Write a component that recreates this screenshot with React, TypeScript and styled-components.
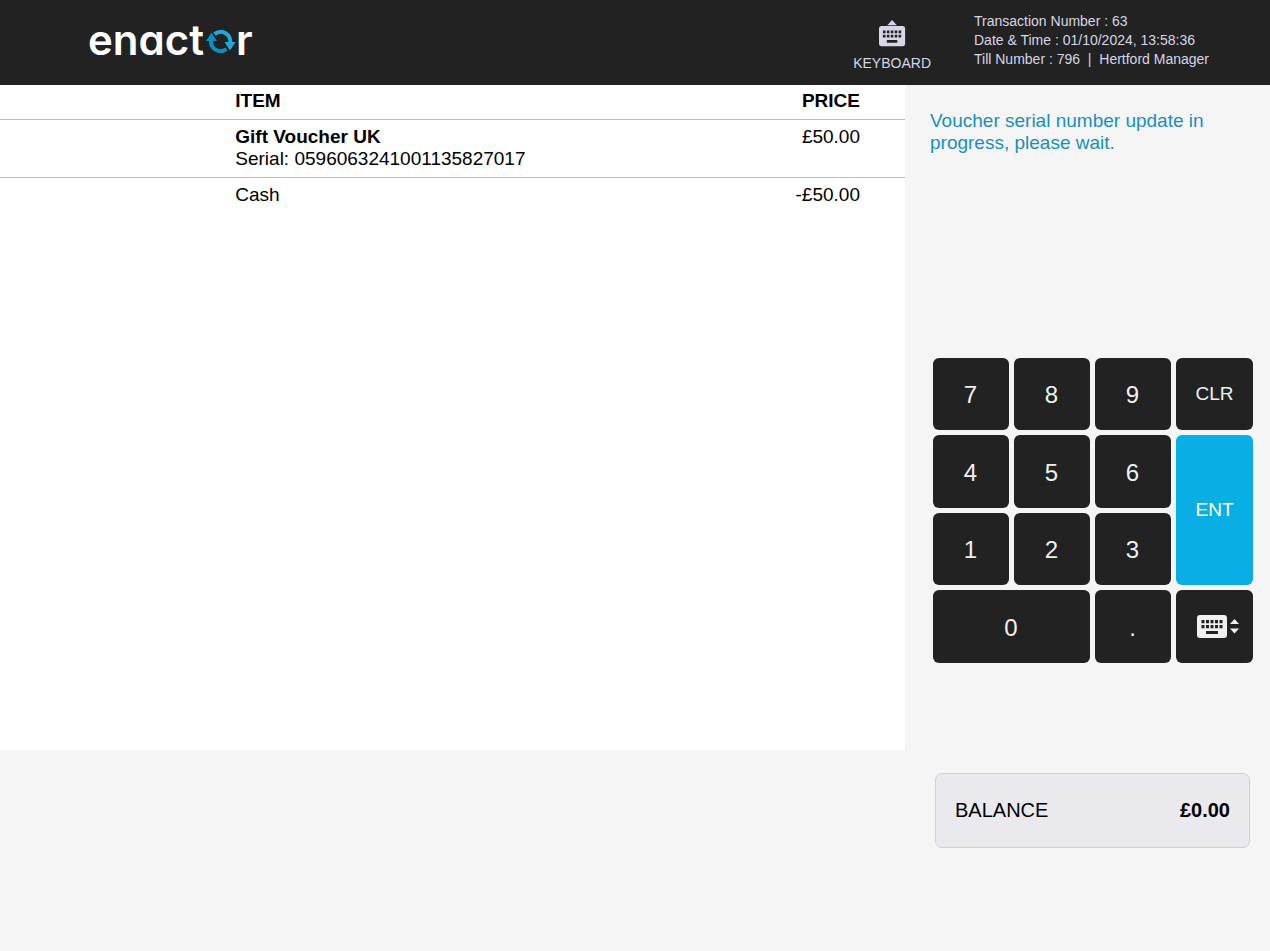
import React from "react";
import styled, { createGlobalStyle } from "styled-components";

const GlobalStyle = createGlobalStyle`
  *, *::before, *::after { box-sizing: border-box; }
  body {
    margin: 0;
    background: #f5f5f5;
    color: #000;
    font-family: "Liberation Sans", Arial, sans-serif;
  }
  button { font-family: inherit; cursor: pointer; }
`;

const Page = styled.div`
  display: flex;
  flex-direction: column;
  min-height: 100vh;
`;

const Header = styled.header`
  display: flex;
  align-items: flex-start;
  min-height: 85px;
  padding-left: 88px;
  background: #222;
  color: #d6d6e6;
`;

const Logo = styled.div`
  display: flex;
  align-items: center;
  margin-right: auto;
  padding-top: 15px;
  color: #fff;
  font-family: Inter, sans-serif;
  font-size: 42px;
  font-weight: 600;
  font-feature-settings: "cv11";
  line-height: 50px;
`;

const LogoMark = styled.svg`
  width: 30px;
  height: 26px;
  margin: 4px 0 0 2px;
`;

const KeyboardButton = styled.button`
  display: flex;
  flex-direction: column;
  align-items: center;
  gap: 8px;
  margin: 20px 43px 0 0;
  padding: 0;
  border: 0;
  background: none;
  color: inherit;
  font-size: 14px;
  line-height: 16px;
`;

const TillInfo = styled.div`
  width: 296px;
  padding-top: 12px;
  font-size: 14px;
  line-height: 19px;
`;

const Main = styled.main`
  display: grid;
  grid-template-columns: minmax(0, 1fr) minmax(320px, 365px);
  flex: 1;
`;

const Basket = styled.section`
  align-self: start;
  min-height: calc(70vh - 1px);
  background: #fff;
`;

const BasketTable = styled.table`
  width: 100%;
  border-collapse: collapse;
  font-size: 19px;
  line-height: 22px;
`;

const Cell = styled.td<{ $price?: boolean }>`
  padding: ${(p) => (p.$price ? "6px 45px 7px 0" : "6px 0 7px 26%")};
  text-align: ${(p) => (p.$price ? "right" : "left")};
  vertical-align: top;

  thead & { padding-top: 5px; }
`;

const Row = styled.tr`
  tbody > & { border-top: 1px solid #bcbcbc; }
`;

const ItemName = styled.strong`
  display: block;
`;

const Side = styled.aside`
  display: flex;
  flex-direction: column;
  padding: 25px 15px 0 25px;
`;

const Message = styled.p`
  min-height: 248px;
  margin: 0;
  color: #1a8fbd;
  font-size: 19px;
  line-height: 22px;
`;

const Keypad = styled.div`
  display: grid;
  grid-template-columns: 76fr 76fr 76fr 77fr;
  grid-template-rows: 72fr 73fr 72fr 73fr;
  gap: 5px;
  height: 305px;
  margin: 0 2px 0 3px;
`;

const Key = styled.button<{ $wide?: boolean; $tall?: boolean; $label?: boolean }>`
  display: flex;
  align-items: center;
  justify-content: center;
  grid-column: span ${(p) => (p.$wide ? 2 : 1)};
  grid-row: span ${(p) => (p.$tall ? 2 : 1)};
  padding: ${(p) => (p.$label ? "0" : "2px 1px 0 0")};
  border: 0;
  border-radius: 6px;
  background: ${(p) => (p.$tall ? "#09aee4" : "#222")};
  color: ${(p) => (p.$tall ? "#fff" : "#f0f0f0")};
  font-size: ${(p) => (p.$label ? 19 : 24)}px;
`;

const Balance = styled.div`
  display: flex;
  align-items: center;
  justify-content: space-between;
  height: 75px;
  margin: 110px 5px 0;
  padding: 0 19px;
  border: 1px solid #cfcfdc;
  border-radius: 7px;
  background: #eae9ee;
  font-size: 20px;
`;

const KeyboardShape = () => (
  <path
    fillRule="evenodd"
    d="M3 0H27Q30 0 30 3V20Q30 23 27 23H3Q0 23 0 20V3Q0 0 3 0Z
      M4.500 5v3.200h3v-3.200Z M9 5v3.200h3v-3.200Z M13.500 5v3.200h3v-3.200Z M18 5v3.200h3v-3.200Z M22.500 5v3.200h3v-3.200Z
      M4.500 10v3.200h3v-3.200Z M9 10v3.200h3v-3.200Z M13.500 10v3.200h3v-3.200Z M18 10v3.200h3v-3.200Z M22.500 10v3.200h3v-3.200Z
      M9 16v3h12v-3Z"
  />
);

const digits = ["7", "8", "9", "CLR", "4", "5", "6", "ENT", "1", "2", "3"];

export default function App() {
  return (
    <Page>
      <GlobalStyle />
      <Header>
        <Logo>
          enact
          <LogoMark viewBox="0 0 30 26" role="img" aria-label="o" fill="none">
            <path d="M5.300 10.500A9.500 9.500 0 0 0 20.500 20" stroke="#0c8fc0" strokeWidth="4" />
            <path d="M0 12L5.500 3.500L11 12Z" fill="#0c8fc0" />
            <path d="M8.500 5.200A9.500 9.500 0 0 1 24 14.500" stroke="#22a9dc" strokeWidth="4" />
            <path d="M18.500 13H29.500L24 21.500Z" fill="#22a9dc" />
          </LogoMark>
          r
        </Logo>
        <KeyboardButton type="button">
          <svg width="27" height="27" viewBox="0 0 31 31" fill="#d6d6e6" aria-hidden="true">
            <path d="M9.500 6L15 0L20.500 6Z" />
            <g transform="translate(0 7)">
              <KeyboardShape />
            </g>
          </svg>
          KEYBOARD
        </KeyboardButton>
        <TillInfo>
          <div>Transaction Number : 63</div>
          <div>Date &amp; Time : 01/10/2024, 13:58:36</div>
          <div>Till Number : 796 &nbsp;|&nbsp; Hertford Manager</div>
        </TillInfo>
      </Header>
      <Main>
        <Basket>
          <BasketTable>
            <thead>
              <Row>
                <Cell as="th" scope="col">ITEM</Cell>
                <Cell as="th" scope="col" $price>PRICE</Cell>
              </Row>
            </thead>
            <tbody>
              <Row>
                <Cell>
                  <ItemName>Gift Voucher UK</ItemName>
                  Serial: 0596063241001135827017
                </Cell>
                <Cell $price>£50.00</Cell>
              </Row>
              <Row>
                <Cell>Cash</Cell>
                <Cell $price>-£50.00</Cell>
              </Row>
            </tbody>
          </BasketTable>
        </Basket>
        <Side>
          <Message role="status">Voucher serial number update in progress, please wait.</Message>
          <Keypad>
            {digits.map((k) => (
              <Key key={k} type="button" $label={k.length > 1} $tall={k === "ENT"}>
                {k}
              </Key>
            ))}
            <Key type="button" $wide>0</Key>
            <Key type="button">.</Key>
            <Key type="button" $label aria-label="Toggle keyboard">
              <svg width="48" height="23" viewBox="-6 0 48 23" fill="#f0f0f0" aria-hidden="true">
                <KeyboardShape />
                <path d="M33 9L37.500 4L42 9Z M33 13.500H42L37.500 18.500Z" />
              </svg>
            </Key>
          </Keypad>
          <Balance>
            <span>BALANCE</span>
            <strong>£0.00</strong>
          </Balance>
        </Side>
      </Main>
    </Page>
  );
}
